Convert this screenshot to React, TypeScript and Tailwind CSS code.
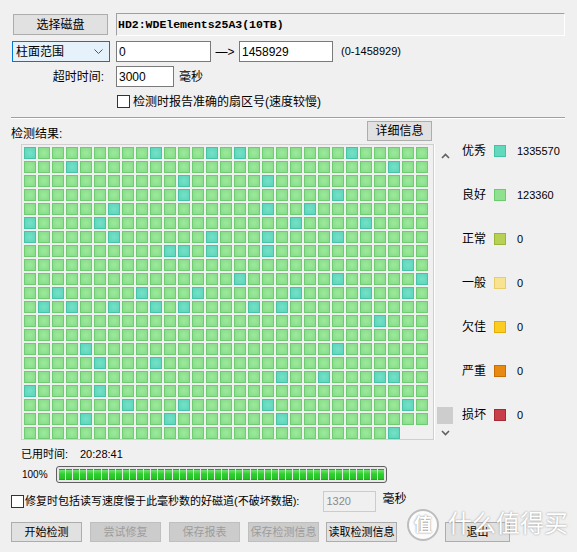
import clsx from "clsx";

// teal ("优秀") cells per row, by column index
const TEAL: number[][] = [
  [0, 9, 13, 15, 23],
  [3, 26],
  [11, 17],
  [11, 22],
  [6, 17, 20],
  [0, 5, 19, 24],
  [0, 6, 13, 17, 22],
  [10, 11, 13, 17],
  [27],
  [15, 22, 28],
  [2, 8, 12, 19, 24, 27],
  [1, 3, 6, 9, 11, 16, 18],
  [25],
  [],
  [4, 22],
  [5, 9],
  [18, 21, 25, 26],
  [0, 5],
  [7, 11, 17, 27],
  [4, 10, 18],
  [26],
];

const COLS = 29;
const TOTAL = 20 * COLS + 27;

const LEGEND = [
  { label: "优秀", value: "1335570", sw: "border-[#43c2a4] bg-[#62d9bd]" },
  { label: "良好", value: "123360", sw: "border-[#6ccb6c] bg-[#8fe08f]" },
  { label: "正常", value: "0", sw: "border-[#9ab53a] bg-[#b7d152]" },
  { label: "一般", value: "0", sw: "border-[#e8cd68] bg-[#f8e390]" },
  { label: "欠佳", value: "0", sw: "border-[#e4ad06] bg-[#fccd20]" },
  { label: "严重", value: "0", sw: "border-[#c96e04] bg-[#e88a12]" },
  { label: "损坏", value: "0", sw: "border-[#a52a34] bg-[#c93e49]" },
];

function Cell({ teal }: { teal: boolean }) {
  return (
    <div
      className={clsx(
        "h-[12px] w-[12px] border",
        teal
          ? "border-[#47c3a5] bg-[radial-gradient(circle,#74e2c8,#5cd4b7)]"
          : "border-[#70cc72] bg-[radial-gradient(circle,#9ceb9c,#86da88)]",
      )}
    />
  );
}

function Btn({
  children,
  disabled,
  className,
}: {
  children: React.ReactNode;
  disabled?: boolean;
  className?: string;
}) {
  return (
    <div
      className={clsx(
        "flex h-[20px] items-center justify-center border text-[11px] leading-none",
        disabled
          ? "border-[#bfbfbf] bg-[#cccccc] text-[#9c9c9c]"
          : "border-[#adadad] bg-[#e1e1e1] text-black",
        className,
      )}
    >
      {children}
    </div>
  );
}

function Check() {
  return <div className="h-[13px] w-[13px] shrink-0 border border-[#333333] bg-white" />;
}

export default function App() {
  const cells = Array.from({ length: TOTAL }, (_, i) => {
    const r = Math.floor(i / COLS);
    const c = i % COLS;
    return <Cell key={i} teal={TEAL[r].includes(c)} />;
  });

  return (
    <div className="relative h-[552px] w-[577px] overflow-hidden bg-[#f0f0f0] font-['Liberation_Sans','Noto_Sans_CJK_SC',sans-serif] text-[12px] leading-none text-black">
      <div className="flex flex-col pl-[12px] pt-[13px]">
        {/* disk */}
        <div className="flex h-[23px] items-center">
          <Btn className="ml-[1px] h-[21px] w-[95px] text-[12px]">选择磁盘</Btn>
          <div className="ml-[8px] flex h-[23px] w-[449px] items-center border border-b-white border-l-[#a0a0a0] border-r-white border-t-[#a0a0a0] pl-[1px] font-['Liberation_Mono',monospace] text-[11.5px] font-bold">
            HD2:WDElements25A3(10TB)
          </div>
        </div>

        {/* range */}
        <div className="mt-[5px] flex h-[21px] items-center">
          <div className="flex h-[21px] w-[98px] items-center justify-between border border-[#0078d7] bg-[#e5f1fb] pl-[3px] pr-[6px]">
            <span>柱面范围</span>
            <svg width="9" height="6" viewBox="0 0 9 6" fill="none" stroke="#555" strokeWidth="1">
              <path d="M0.5 0.5 L4.5 4.5 L8.5 0.5" />
            </svg>
          </div>
          <div className="ml-[6px] flex h-[21px] w-[95px] items-center border border-[#7a7a7a] bg-white pl-[2px]">0</div>
          <div className="w-[28px] text-center">—&gt;</div>
          <div className="flex h-[21px] w-[94px] items-center border border-[#7a7a7a] bg-white pl-[2px]">1458929</div>
          <span className="ml-[8px] text-[11px]">(0-1458929)</span>
        </div>

        {/* timeout */}
        <div className="mt-[4px] flex h-[21px] items-center">
          <div className="w-[92px] text-right">超时时间:</div>
          <div className="ml-[12px] flex h-[21px] w-[58px] items-center border border-[#7a7a7a] bg-white pl-[2px]">3000</div>
          <span className="ml-[5px]">毫秒</span>
        </div>

        <div className="mt-[8px] ml-[105px] flex h-[13px] items-center">
          <Check />
          <span className="ml-[3px]">检测时报告准确的扇区号(速度较慢)</span>
        </div>

        <div className="mt-[9px] ml-[-1px] w-[554px] border-b border-t border-b-white border-t-[#a0a0a0]" />

        {/* results header */}
        <div className="mt-[3px] flex h-[18px] items-center">
          <span className="ml-[-1px] mt-[6px]">检测结果:</span>
          <Btn className="ml-auto mr-[145px] h-[18px] w-[65px] text-[12px]">详细信息</Btn>
        </div>

        {/* grid + legend */}
        <div className="mt-[4px] flex">
          <div className="ml-[9px] h-[296px] w-[413px] border border-[#cfcfcf] p-[2px]">
            <div className="grid grid-cols-[repeat(29,12px)] gap-[2px]">{cells}</div>
          </div>
          <div className="flex h-[296px] w-[21px] flex-col items-center border-l border-white">
            <svg className="mt-[9px]" width="9" height="6" viewBox="0 0 9 6" fill="none" stroke="#606060" strokeWidth="1.6">
              <path d="M1 5 L4.5 1.5 L8 5" />
            </svg>
            <div className="flex-1" />
            <div className="h-[17px] w-[16px] bg-[#cdcdcd]" />
            <svg className="mb-[4px] mt-[6px]" width="9" height="6" viewBox="0 0 9 6" fill="none" stroke="#606060" strokeWidth="1.6">
              <path d="M1 1 L4.5 4.5 L8 1" />
            </svg>
          </div>
          <div className="ml-[7px] flex flex-col gap-[30px]">
            {LEGEND.map((l) => (
              <div key={l.label} className="flex h-[14px] items-center">
                <span className="w-[32px]">{l.label}</span>
                <div className={clsx("h-[12px] w-[12px] border", l.sw)} />
                <span className="ml-[11px] text-[11px]">{l.value}</span>
              </div>
            ))}
          </div>
        </div>

        {/* elapsed */}
        <div className="mt-[7px] ml-[9px] flex h-[14px] items-center text-[11px]">
          <span className="w-[59px]">已用时间:</span>
          <span>20:28:41</span>
        </div>

        <div className="mt-[5px] ml-[10px] flex h-[17px] items-center">
          <span className="w-[34px] text-[10px]">100%</span>
          <div className="flex h-[17px] w-[331px] gap-[1px] rounded-[3px] border border-[#5f5f5f] bg-[#e8e8e8] p-[2px]">
            {Array.from({ length: 46 }, (_, i) => (
              <div key={i} className="flex-1 border-y border-[#1ea81e] bg-[linear-gradient(#6fe36f,#2fcf2f_45%,#24c024)]" />
            ))}
          </div>
        </div>

        {/* repair option */}
        <div className="mt-[8px] ml-[-1px] flex h-[21px] items-center">
          <Check />
          <span className="ml-[1px] text-[11px]">修复时包括读写速度慢于此毫秒数的好磁道(不破坏数据):</span>
          <div className="ml-[24px] flex h-[21px] w-[53px] items-center border border-[#cccccc] bg-[#f0f0f0] pl-[2px] text-[11px] text-[#8a8a8a]">
            1320
          </div>
          <span className="mb-[6px] ml-[6px]">毫秒</span>
        </div>

        {/* actions */}
        <div className="mt-[10px] ml-[-1px] flex h-[20px] gap-[8px]">
          <Btn className="w-[71px]">开始检测</Btn>
          <Btn disabled className="w-[71px]">尝试修复</Btn>
          <Btn disabled className="w-[71px]">保存报表</Btn>
          <Btn disabled className="w-[71px]">保存检测信息</Btn>
          <Btn className="ml-[-1px] w-[71px]">读取检测信息</Btn>
          <Btn className="ml-[40px] w-[65px]">退出</Btn>
        </div>
      </div>

      {/* watermark */}
      <div className="absolute left-[407px] top-[509px] flex h-[32px] w-[32px] items-center justify-center rounded-full border-2 border-[#bdbdbd] bg-white/80 text-[18px] font-bold text-white [text-shadow:0_0_2px_#777]">
        值
      </div>
      <div className="absolute left-[448px] top-[510px] font-['Noto_Sans_CJK_SC',sans-serif] text-[24px] leading-none text-white [text-shadow:0_0_2px_#8a8a8a]">
        什么值得买
      </div>
    </div>
  );
}
